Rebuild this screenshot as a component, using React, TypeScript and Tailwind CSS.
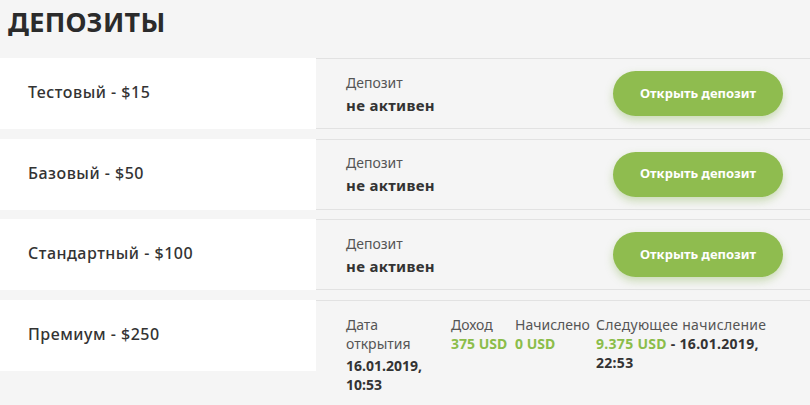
import React from "react";

const plans = [
    { name: "Тестовый - $15" },
    { name: "Базовый - $50" },
    { name: "Стандартный - $100" },
];

function OpenButton() {
    return (
        <button className="w-[170px] h-[45px] rounded-full bg-[#8fbc4f] text-white text-[13px] font-bold shadow-[0_4px_8px_rgba(120,170,60,0.35)]">
            Открыть депозит
        </button>
    );
}

export default function App() {
    return (
        <div
            className="w-[810px] h-[405px] bg-[#f5f5f5] overflow-hidden text-[#333]"
            style={{ fontFamily: '"Noto Sans", "Open Sans", sans-serif' }}
        >
            <h1 className="px-2 pt-[3px] h-[58px] text-[27px] font-bold tracking-[0.3px] text-[#2b2b2b] leading-[38px]">
                ДЕПОЗИТЫ
            </h1>

            <div className="flex flex-col gap-[9.5px]">
                {plans.map((p) => (
                    <div key={p.name} className="flex items-start">
                        <div className="w-[316px] h-[71px] bg-white flex items-center pl-7 pb-[3px] text-[16px] font-medium tracking-[0.5px]">
                            {p.name}
                        </div>
                        <div className="flex-1 h-[71px] border-y border-[#e2e2e2] flex items-center justify-between pl-[30px] pr-[27px]">
                            <div className="flex flex-col leading-[22px]">
                                <span className="text-[14px] text-[#555]">Депозит</span>
                                <span className="text-[15px] font-bold text-[#333] tracking-[0.3px]">не активен</span>
                            </div>
                            <OpenButton />
                        </div>
                    </div>
                ))}

                {/* active deposit */}
                <div className="flex items-start">
                    <div className="w-[316px] h-[71px] bg-white flex items-center pl-7 pb-[3px] text-[16px] font-medium tracking-[0.5px]">
                        Премиум - $250
                    </div>
                    <div className="flex-1 border-t border-[#e2e2e2] pl-[30px] pt-[14px] grid grid-cols-[105px_64px_81px_1fr] text-[14px] leading-[19px]">
                        <div>
                            <div className="text-[#555] pr-4">Дата открытия</div>
                            <div className="font-bold mt-[3px] pr-6">16.01.2019, 10:53</div>
                        </div>
                        <div>
                            <div className="text-[#555]">Доход</div>
                            <div className="font-bold text-[#8bbd4a]">375 USD</div>
                        </div>
                        <div>
                            <div className="text-[#555]">Начислено</div>
                            <div className="font-bold text-[#8bbd4a]">0 USD</div>
                        </div>
                        <div className="pr-[34px] tracking-[0.3px]">
                            <div className="text-[#555]">Следующее начисление</div>
                            <div className="font-bold">
                                <span className="text-[#8bbd4a]">9.375 USD</span> - 16.01.2019, 22:53
                            </div>
                        </div>
                    </div>
                </div>
            </div>
        </div>
    );
}
